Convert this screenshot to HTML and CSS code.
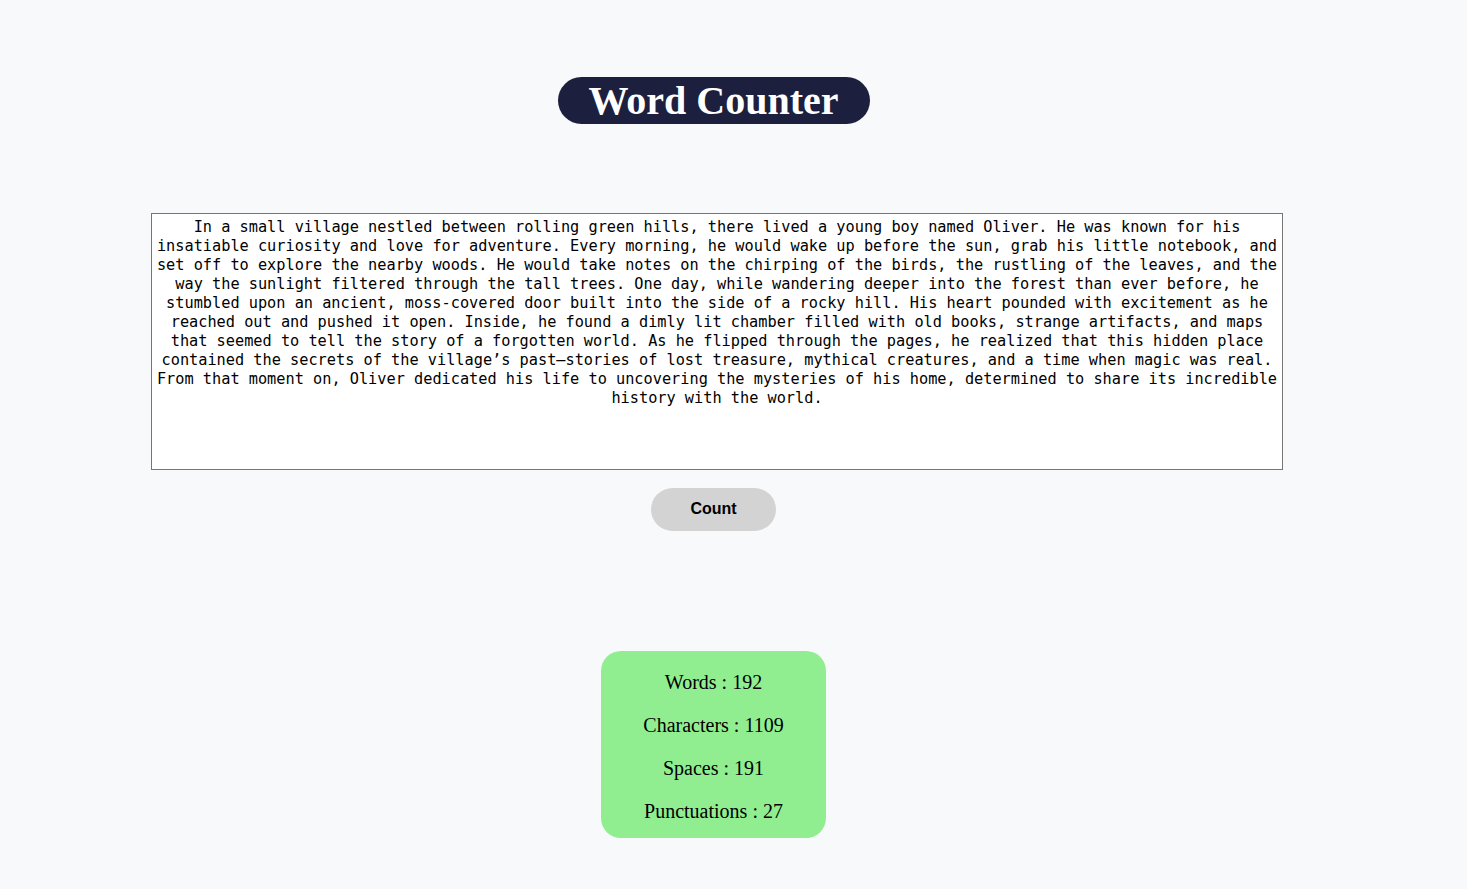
FILE: index.html
```html
<!DOCTYPE html>
<html lang="en">
<head>
<meta charset="utf-8">
<title>Word Counter</title>
<link rel="stylesheet" href="styles.css">
</head>
<body>
<main class="app">
  <h1 class="title">Word Counter</h1>
  <textarea class="input" spellcheck="false">In a small village nestled between rolling green hills, there lived a young boy named Oliver. He was known for his insatiable curiosity and love for adventure. Every morning, he would wake up before the sun, grab his little notebook, and set off to explore the nearby woods. He would take notes on the chirping of the birds, the rustling of the leaves, and the way the sunlight filtered through the tall trees. One day, while wandering deeper into the forest than ever before, he stumbled upon an ancient, moss-covered door built into the side of a rocky hill. His heart pounded with excitement as he reached out and pushed it open. Inside, he found a dimly lit chamber filled with old books, strange artifacts, and maps that seemed to tell the story of a forgotten world. As he flipped through the pages, he realized that this hidden place contained the secrets of the village’s past—stories of lost treasure, mythical creatures, and a time when magic was real. From that moment on, Oliver dedicated his life to uncovering the mysteries of his home, determined to share its incredible history with the world.</textarea>
  <button class="count-btn" type="button">Count</button>
  <section class="results">
    <p class="stat">Words : 192</p>
    <p class="stat">Characters : 1109</p>
    <p class="stat">Spaces : 191</p>
    <p class="stat">Punctuations : 27</p>
  </section>
</main>
</body>
</html>
```

FILE: styles.css
```css
html, body {
  margin: 0;
  padding: 0;
  background: #f8f9fa;
}

body {
  font-family: "Liberation Serif", "Times New Roman", serif;
  color: #000;
}

.app {
  display: flex;
  flex-direction: column;
  align-items: center;
  padding-top: 77px;
  padding-right: 40px;
}

.title {
  margin: 0;
  background: #1c1f3d;
  color: #ffffff;
  font-family: "Liberation Serif", "Times New Roman", serif;
  font-weight: bold;
  font-size: 40px;
  line-height: 47px;
  height: 47px;
  padding: 0 31px;
  border-radius: 24px;
}

.input {
  margin-top: 89px;
  margin-left: 7px;
  width: 1132px;
  height: 257px;
  box-sizing: border-box;
  border: 1px solid #767676;
  padding: 4px 2px 2px;
  background: #ffffff;
  font-family: "DejaVu Sans Mono", "Liberation Mono", monospace;
  font-size: 15.25px;
  line-height: 19px;
  text-align: center;
  color: #000;
  resize: none;
  overflow: hidden;
  outline: none;
}

.count-btn {
  margin-top: 18px;
  width: 125px;
  height: 43px;
  padding: 0 0 2px;
  border: none;
  border-radius: 22px;
  background: #d3d3d3;
  font-family: "Liberation Sans", Arial, sans-serif;
  font-weight: bold;
  font-size: 16px;
  color: #000;
  cursor: pointer;
}

.results {
  margin-top: 120px;
  width: 225px;
  height: 187px;
  box-sizing: border-box;
  background: #90ee90;
  border-radius: 20px;
  padding-top: 20px;
  display: flex;
  flex-direction: column;
  align-items: center;
  gap: 20px;
}

.stat {
  margin: 0;
  font-size: 20px;
  line-height: 23px;
}
```
